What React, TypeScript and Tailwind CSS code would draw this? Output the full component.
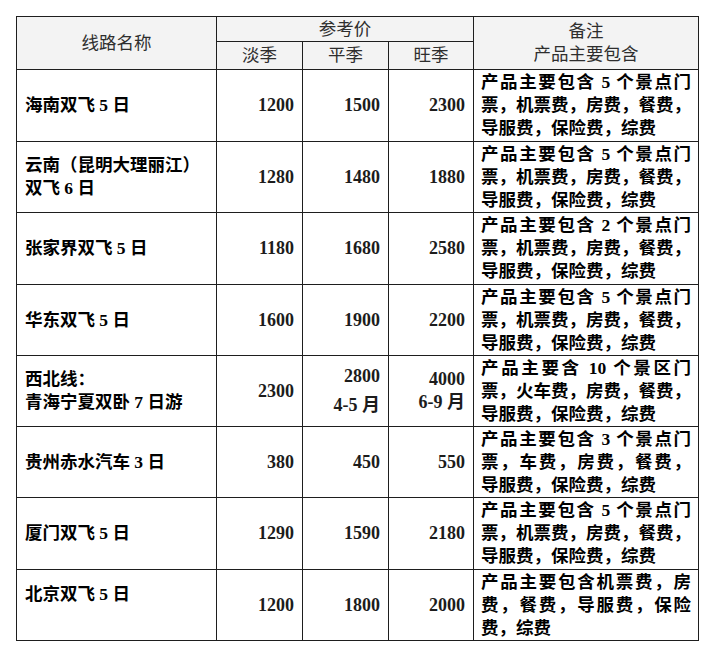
import React from "react";

const FONT = {
  fontFamily: '"Liberation Serif", "Noto Sans CJK SC", serif',
};

type Row = {
  name: string[];
  low: string[];
  mid: string[];
  high: string[];
  note: string[];
  h: string;
  namePad?: string;
};

const noteFive = [
  "产品主要包含 5 个景点门",
  "票，机票费，房费，餐费，",
  "导服费，保险费，综费",
];

const rows: Row[] = [
  { name: ["海南双飞 5 日"], low: ["1200"], mid: ["1500"], high: ["2300"], note: noteFive, h: "h-[72px]" },
  { name: ["云南（昆明大理丽江）", "双飞 6 日"], low: ["1280"], mid: ["1480"], high: ["1880"], note: noteFive, h: "h-[71px]" },
  {
    name: ["张家界双飞 5 日"],
    low: ["1180"],
    mid: ["1680"],
    high: ["2580"],
    note: ["产品主要包含 2 个景点门", "票，机票费，房费，餐费，", "导服费，保险费，综费"],
    h: "h-[72px]",
  },
  { name: ["华东双飞 5 日"], low: ["1600"], mid: ["1900"], high: ["2200"], note: noteFive, h: "h-[71px]" },
  {
    name: ["西北线：", "青海宁夏双卧 7 日游"],
    low: ["2300"],
    mid: ["2800", "4-5 月"],
    high: ["4000", "6-9 月"],
    note: ["产品主要含 10 个景区门", "票，火车费，房费，餐费，", "导服费，保险费，综费"],
    h: "h-[71px]",
  },
  {
    name: ["贵州赤水汽车 3 日"],
    low: ["380"],
    mid: ["450"],
    high: ["550"],
    note: ["产品主要包含 3 个景点门", "票，车费，房费，餐费，", "导服费，保险费，综费"],
    h: "h-[71px]",
  },
  { name: ["厦门双飞 5 日"], low: ["1290"], mid: ["1590"], high: ["2180"], note: noteFive, h: "h-[72px]" },
  {
    name: ["北京双飞 5 日"],
    low: ["1200"],
    mid: ["1800"],
    high: ["2000"],
    note: ["产品主要包含机票费，房", "费，餐费，导服费，保险", "费，综费"],
    h: "h-[71px]",
    namePad: "pb-[22px]",
  },
];

const cell = "border border-[#1e1e1e] p-0";
const head = "border border-[#1e1e1e] p-0 bg-[#f3f3f3] text-[#2e2e2e] font-normal text-center text-[17.5px]";

function Prices({ lines, lh }: { lines: string[]; lh: string }) {
  return (
    <td className={`${cell} text-right pr-[8px] align-middle text-[18px] font-bold text-[#1c1c1c] ${lh}`}>
      {lines.map((l) => (
        <div key={l} className="whitespace-nowrap">
          {l}
        </div>
      ))}
    </td>
  );
}

export default function App() {
  return (
    <div className="w-[720px] h-[653px] bg-white pt-4 pl-4 text-black" style={FONT}>
      <table className="table-fixed border-collapse w-[682px]">
        <colgroup>
          <col className="w-[200px]" />
          <col className="w-[86px]" />
          <col className="w-[86px]" />
          <col className="w-[85px]" />
          <col className="w-[225px]" />
        </colgroup>
        <thead>
          <tr className="h-[25px]">
            <th rowSpan={2} className={head}>
              线路名称
            </th>
            <th colSpan={3} className={`${head} leading-[22px]`}>
              参考价
            </th>
            <th rowSpan={2} className={`${head} leading-[23px]`}>
              <div>备注</div>
              <div>产品主要包含</div>
            </th>
          </tr>
          <tr className="h-[28px]">
            <th className={head}>淡季</th>
            <th className={head}>平季</th>
            <th className={head}>旺季</th>
          </tr>
        </thead>
        <tbody>
          {rows.map((r) => (
            <tr key={r.name.join()} className={r.h}>
              <td className={`${cell} pl-[8px] font-bold text-[17.5px] leading-[23px] align-middle ${r.namePad ?? ""}`}>
                {r.name.map((n) => (
                  <div key={n} className="whitespace-nowrap">
                    {n}
                  </div>
                ))}
              </td>
              <Prices lines={r.low} lh="leading-[23px]" />
              <Prices lines={r.mid} lh="leading-[29px]" />
              <Prices lines={r.high} lh="leading-[23px]" />
              <td className={`${cell} px-[7px] font-bold text-[17.5px] leading-[23px] align-middle`}>
                {r.note.map((n, i) => (
                  <div
                    key={n}
                    className={
                      i < r.note.length - 1
                        ? "whitespace-nowrap text-justify [text-align-last:justify]"
                        : "whitespace-nowrap"
                    }
                  >
                    {n}
                  </div>
                ))}
              </td>
            </tr>
          ))}
        </tbody>
      </table>
    </div>
  );
}
